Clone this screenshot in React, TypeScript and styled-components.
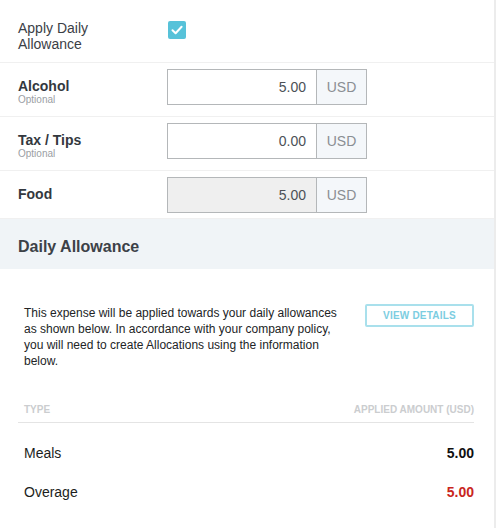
import styled, { createGlobalStyle } from "styled-components";

const GlobalStyle = createGlobalStyle`
	body {
		margin: 0;
		background: #ffffff;
		font-family: "Liberation Sans", Arial, sans-serif;
	}
`;

const Page = styled.div`
	width: 494px;
	min-height: 528px;
	border-right: 2px solid #ececec;
	background: #ffffff;
`;

const FormRow = styled.div<{ $top: number; $height: number }>`
	display: grid;
	grid-template-columns: 167px 200px;
	align-items: start;
	box-sizing: border-box;
	height: ${(p) => p.$height}px;
	padding-top: ${(p) => p.$top}px;
	border-bottom: 1px solid #f0f0f0;
`;

const LabelBox = styled.div<{ $offset: number }>`
	padding-left: 18px;
	padding-top: ${(p) => p.$offset}px;
`;

const PlainLabel = styled.div`
	font-size: 14px;
	line-height: 16px;
	color: #3b4046;
	max-width: 110px;
`;

const BoldLabel = styled.div`
	font-size: 14px;
	line-height: 16px;
	font-weight: bold;
	color: #33383e;
`;

const Hint = styled.div`
	font-size: 10px;
	line-height: 12px;
	color: #9a9ea3;
`;

const Checkbox = styled.div`
	width: 18px;
	height: 18px;
	margin: 1px 0 0 1px;
	border-radius: 2px;
	background: #57c2d9;
	display: flex;
	align-items: center;
	justify-content: center;
`;

const InputGroup = styled.div<{ $disabled?: boolean }>`
	display: flex;
	height: 36px;
	box-sizing: border-box;
	border: 1px solid #b4b7b9;
	background: ${(p) => (p.$disabled ? "#efefef" : "#ffffff")};
`;

const Amount = styled.div`
	flex: 1;
	display: flex;
	align-items: center;
	justify-content: flex-end;
	padding-right: 10px;
	font-size: 14px;
	color: #4c5157;
`;

const Addon = styled.div`
	width: 49px;
	border-left: 1px solid #b4b7b9;
	background: #f4f7fa;
	display: flex;
	align-items: center;
	justify-content: center;
	font-size: 14px;
	color: #8a8e93;
`;

const SectionHeader = styled.div`
	height: 50px;
	box-sizing: border-box;
	display: flex;
	align-items: center;
	padding: 6px 0 0 18px;
	background: #f0f4f7;
	font-size: 16px;
	font-weight: bold;
	color: #3c4147;
`;

const SectionBody = styled.div`
	padding: 35px 20px 0 18px;
`;

const Intro = styled.div`
	display: flex;
	justify-content: space-between;
	align-items: flex-start;
`;

const Paragraph = styled.p`
	margin: 1px 0 0 6px;
	width: 322px;
	font-size: 12px;
	line-height: 16px;
	color: #222426;
`;

const OutlineButton = styled.button`
	width: 109px;
	height: 23px;
	box-sizing: border-box;
	border: 2px solid #a9e0ec;
	border-radius: 2px;
	background: #ffffff;
	font-family: inherit;
	font-size: 10px;
	font-weight: bold;
	letter-spacing: 0.2px;
	color: #7ccde1;
	padding: 0;
	cursor: pointer;
`;

const Table = styled.div`
	margin-top: 35px;
`;

const HeadRow = styled.div`
	display: flex;
	justify-content: space-between;
	padding: 0 0 6px 6px;
	border-bottom: 1px solid #e4e4e4;
	font-size: 10px;
	line-height: 12px;
	font-weight: bold;
	color: #cbcdcf;
	margin-bottom: 10px;
`;

const DataRow = styled.div`
	display: flex;
	justify-content: space-between;
	align-items: center;
	height: 39px;
	padding-left: 6px;
	font-size: 14px;
`;

const TypeCell = styled.span`
	color: #1c1e20;
`;

const ValueCell = styled.span<{ $over?: boolean }>`
	font-weight: bold;
	color: ${(p) => (p.$over ? "#c9261d" : "#111111")};
`;

const fields = [
	{ label: "Alcohol", hint: "Optional", value: "5.00", disabled: false, height: 54 },
	{ label: "Tax / Tips", hint: "Optional", value: "0.00", disabled: false, height: 54 },
	{ label: "Food", hint: "", value: "5.00", disabled: true, height: 48 },
];

export default function App() {
	return (
		<>
			<GlobalStyle />
			<Page>
				<FormRow $top={20} $height={63}>
					<LabelBox $offset={0}>
						<PlainLabel>Apply Daily Allowance</PlainLabel>
					</LabelBox>
					<div>
						<Checkbox>
							<svg width="14" height="14" viewBox="0 0 14 14">
								<path
									d="M2.5 7.2 L5.6 10.2 L11.6 3.8"
									fill="none"
									stroke="#ffffff"
									strokeWidth="2"
									strokeLinecap="round"
									strokeLinejoin="round"
								/>
							</svg>
						</Checkbox>
					</div>
				</FormRow>

				{fields.map((f) => (
					<FormRow key={f.label} $top={6} $height={f.height}>
						<LabelBox $offset={9}>
							<BoldLabel>{f.label}</BoldLabel>
							{f.hint && <Hint>{f.hint}</Hint>}
						</LabelBox>
						<InputGroup $disabled={f.disabled}>
							<Amount>{f.value}</Amount>
							<Addon>USD</Addon>
						</InputGroup>
					</FormRow>
				))}

				<SectionHeader>Daily Allowance</SectionHeader>

				<SectionBody>
					<Intro>
						<Paragraph>
							This expense will be applied towards your daily allowances
							as shown below. In accordance with your company policy,
							you will need to create Allocations using the information
							below.
						</Paragraph>
						<OutlineButton>VIEW DETAILS</OutlineButton>
					</Intro>

					<Table>
						<HeadRow>
							<span>TYPE</span>
							<span>APPLIED AMOUNT (USD)</span>
						</HeadRow>
						<DataRow>
							<TypeCell>Meals</TypeCell>
							<ValueCell>5.00</ValueCell>
						</DataRow>
						<DataRow>
							<TypeCell>Overage</TypeCell>
							<ValueCell $over>5.00</ValueCell>
						</DataRow>
					</Table>
				</SectionBody>
			</Page>
		</>
	);
}
